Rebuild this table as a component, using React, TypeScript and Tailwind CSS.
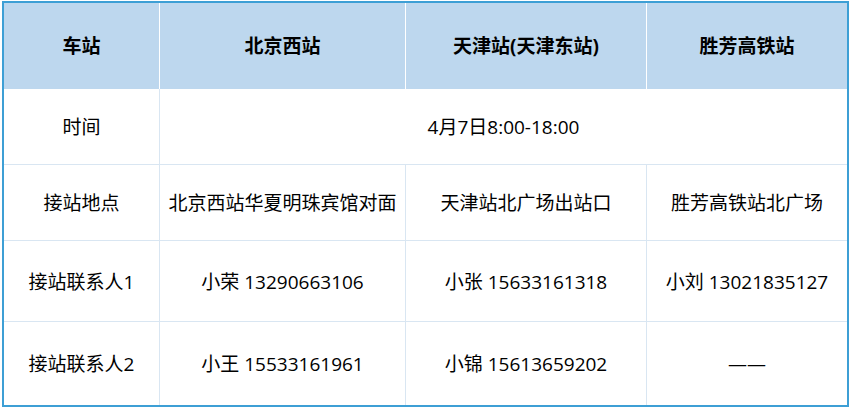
const font = { fontFamily: '"Open Sans", "Noto Sans CJK SC", sans-serif' };

const line = "border-[#d9e6f2]";

function Cell({ w, text, last, head }: { w: string; text: string; last?: boolean; head?: boolean }) {
  return (
    <div
      className={`${w} h-full flex items-center justify-center ${
        last ? "" : head ? "border-r border-white" : `border-r ${line}`
      } ${head ? "font-bold" : "pt-[2px]"}`}
    >
      {text}
    </div>
  );
}

const rows = [
  { h: "h-[76px]", cells: ["接站地点", "北京西站华夏明珠宾馆对面", "天津站北广场出站口", "胜芳高铁站北广场"] },
  { h: "h-[81px]", cells: ["接站联系人1", "小荣 13290663106", "小张 15633161318", "小刘 13021835127"] },
  { h: "h-[84px]", cells: ["接站联系人2", "小王 15533161961", "小锦 15613659202", "——"] },
];

const widths = ["w-[156px]", "w-[246px]", "w-[241px]", "w-[200px]"];

export default function App() {
  return (
    <div className="w-[850px] h-[408px] bg-white pt-px pl-[2px]" style={font}>
      <div className="w-[847px] h-[406px] border-2 border-[#3d9fd5] flex flex-col text-[19px] text-black">
        <div className="h-[86px] flex bg-[#bdd7ee]">
          {["车站", "北京西站", "天津站(天津东站)", "胜芳高铁站"].map((t, i) => (
            <Cell key={t} w={widths[i]} text={t} head last={i === 3} />
          ))}
        </div>
        <div className="h-[75px] flex">
          <Cell w={widths[0]} text="时间" />
          <div className="flex-1 h-full flex items-center justify-center pt-[2px]">4月7日8:00-18:00</div>
        </div>
        {rows.map((r) => (
          <div key={r.cells[0]} className={`${r.h} flex border-t ${line}`}>
            {r.cells.map((t, i) => (
              <Cell key={i} w={widths[i]} text={t} last={i === 3} />
            ))}
          </div>
        ))}
      </div>
    </div>
  );
}
